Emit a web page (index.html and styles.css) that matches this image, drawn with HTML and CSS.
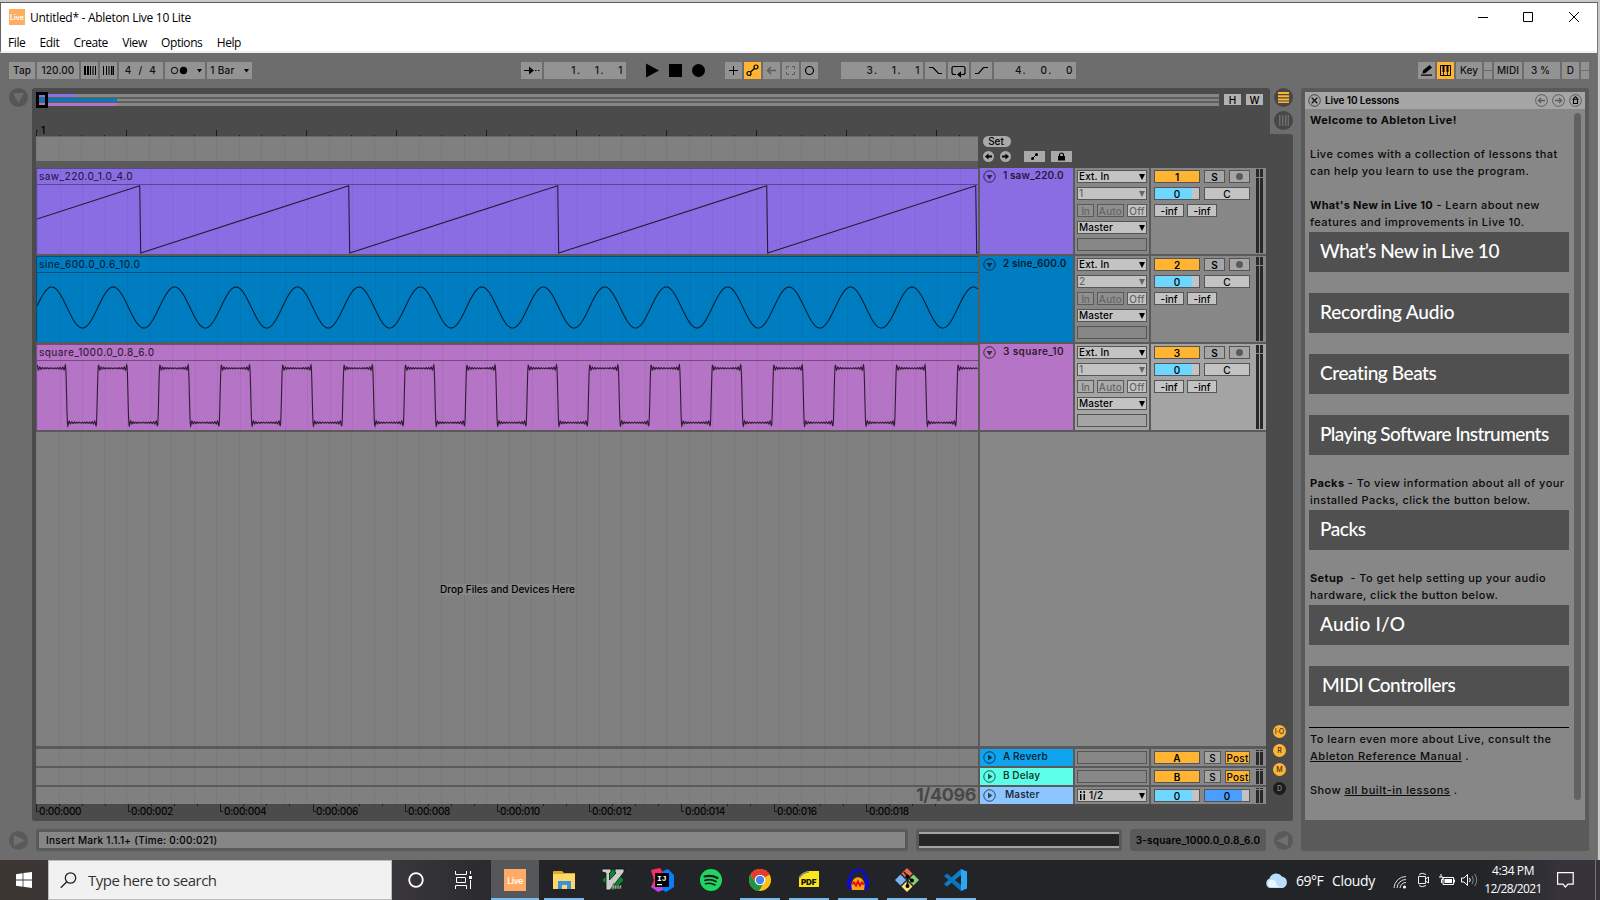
FILE: index.html
```html
<!DOCTYPE html>
<html lang="en">
<head>
<meta charset="utf-8">
<title>Untitled* - Ableton Live 10 Lite</title>
<link rel="stylesheet" href="styles.css">
</head>
<body>
<div class="desktop">
<div class="window">
  <div class="titlebar">
    <span class="app-icon">Live</span>
    <span class="title">Untitled* - Ableton Live 10 Lite</span>
    <svg class="winbtns" width="120" height="28" fill="none" stroke="#000"><path d="M1 14.5h10M46.5 9.5h9v9h-9zM92 9l10 10M102 9l-10 10"/></svg>
  </div>
  <div class="menubar"><span>File</span><span>Edit</span><span>Create</span><span>View</span><span>Options</span><span>Help</span></div>
  <div class="app">
    <div class="toolbar">
      <div class="tb" style="width:26px">Tap</div>
      <div class="tb" style="width:42px">120.00</div>
      <div class="tb" style="width:17px"><svg width="17" height="17"><path d="M3 4h2v9H3zM6 4h2v9H6zM9 4h1v9H9zM11.500 4h1v9h-1zM14 4h1v9h-1z"/></svg></div>
      <div class="tb" style="width:17px"><svg width="17" height="17"><path d="M3 4h1v9H3zM6 4h1v9H6zM8.500 4h1v9h-1zM11 4h1.500v9H11zM13 4h1v9h-1z"/></svg></div>
      <div class="tb wide" style="width:44px">4 / 4</div>
      <div class="tb" style="width:40px"><svg width="40" height="17"><circle cx="9.500" cy="8.500" r="3.200" fill="none" stroke="#000"/><circle cx="18.500" cy="8.500" r="3.700"/><path d="M32 7h5l-2.500 3.500z"/></svg></div>
      <div class="tb bar" style="width:45px">1 Bar<svg width="5" height="4"><path d="M0 0h5l-2.500 3.500z"/></svg></div>

      <div class="tb g2" style="width:21px"><svg width="21" height="17"><path d="M3 8h5V4.500l5 4-5 4V9H3zM14 8h1.500v1H14zM17 8h1.500v1H17z"/></svg></div>
      <div class="tb num" style="width:82px">1.&nbsp; 1.&nbsp; 1</div>
      <svg class="transport" width="62" height="17"><path d="M2 1.500v14l13-7zM25 2h13v13H25z"/><circle cx="54.500" cy="8.500" r="6.500"/></svg>
      <div class="tb" style="width:17px;margin-left:17px"><svg width="17" height="17"><path d="M4 8.500h9M8.500 4v9" stroke="#000"/></svg></div>
      <div class="tb on" style="width:17px"><svg width="17" height="17" fill="none" stroke="#000" stroke-width="1.200"><circle cx="5" cy="11.500" r="2"/><circle cx="12" cy="5" r="2"/><path d="M6.500 10l4-3.500"/></svg></div>
      <div class="tb" style="width:17px"><svg width="17" height="17" fill="none" stroke="#5c5c5c" stroke-width="1.500"><path d="M4.500 8.500H13M8 5L4.500 8.500 8 12"/></svg></div>
      <div class="tb" style="width:17px"><svg width="17" height="17" fill="none" stroke="#5c5c5c"><path d="M4.500 7V4.500H7M10 4.500h2.500V7M12.500 10v2.500H10M7 12.500H4.500V10"/></svg></div>
      <div class="tb" style="width:17px"><svg width="17" height="17"><circle cx="8.500" cy="8.500" r="4" fill="none" stroke="#000" stroke-width="1.200"/></svg></div>

      <div class="tb num" style="width:82px;margin-left:21px">3.&nbsp; 1.&nbsp; 1</div>
      <div class="tb" style="width:21px"><svg width="21" height="17" fill="none" stroke="#000" stroke-width="1.200"><path d="M4 5.500h4l5.500 6H17"/></svg></div>
      <div class="tb" style="width:21px"><svg width="21" height="17" fill="none" stroke="#000" stroke-width="1.200"><path d="M8 12.500H6q-2 0-2-2v-4q0-2 2-2h9q2 0 2 2v4q0 2-2 2h-2"/><path d="M9 12.500l4-3.200v6.400z" fill="#000" stroke="none"/></svg></div>
      <div class="tb" style="width:21px"><svg width="21" height="17" fill="none" stroke="#000" stroke-width="1.200"><path d="M4 11.500h3.500l5-6H17"/></svg></div>
      <div class="tb num" style="width:82px">4.&nbsp; 0.&nbsp; 0</div>

      <div class="tb g4" style="width:17px"><svg width="17" height="17"><path d="M3 12.500h11v1.200H3zM5 8.500L11.500 3 14 5.500 7.500 11 4.500 11.500z"/></svg></div>
      <div class="tb on" style="width:17px"><svg width="17" height="17"><path d="M3.500 3.500h10v10h-10z" fill="none" stroke="#000"/><path d="M5.500 3h2v7h-2zM9.500 3h2v7h-2zM6.200 10h.8v3h-.8zM10.200 10h.8v3h-.8z"/></svg></div>
      <div class="tb" style="width:26px">Key</div>
      <div class="tb lamps"></div>
      <div class="tb" style="width:28px">MIDI</div>
      <div class="tb pct" style="width:36px">3 %</div>
      <div class="tb" style="width:17px">D</div>
      <div class="tb lamps"></div>
    </div>

    <div class="columns">
      <div class="left">
        <div class="main">
          <div class="rail"><svg width="19" height="19"><circle cx="9.500" cy="9.500" r="9.500" fill="#565656"/><path d="M4 5h11l-5.500 10z" fill="#6d6d6d"/></svg></div>
          <div class="arr">
            <div class="overview">
              <svg width="1183" height="16">
                <path d="M2 2h1181v3.300H2zM2 6.700h1181v2.600H2zM2 10.700h1181V14H2z" fill="#868686"/>
                <path d="M2 5h1181v1.500H2zM2 9.200h1181v1.500H2z" fill="#626262"/>
                <path d="M2 2h38v3H2z" fill="#8b6fe3"/><path d="M2 6.500h79v3.200H2z" fill="#007dc2"/><path d="M2 11h79v3H2z" fill="#b573c4"/>
                <path d="M1.500 1.500h9v13h-9z" fill="none" stroke="#000" stroke-width="3"/>
              </svg>
              <div class="hw">H</div><div class="hw">W</div>
            </div>
            <div class="rulerrow">
              <div class="beats">
                <svg class="ruler" id="beatRuler" width="942" height="29"></svg>
                <span class="bar1">1</span>
                <div class="scrub lines"></div>
              </div>
              <div class="locators">
                <span class="set">Set</span>
                <div class="lrow">
                  <svg width="11" height="11"><circle cx="5.500" cy="5.500" r="5.500" fill="#a9a9a9"/><path d="M2 5.500L5.500 2.500v2H9v2H5.500v2z"/></svg>
                  <svg width="11" height="11"><circle cx="5.500" cy="5.500" r="5.500" fill="#a9a9a9"/><path d="M9 5.500L5.500 2.500v2H2v2h3.500v2z"/></svg>
                  <svg class="lb1" width="21" height="11"><path d="M0 0h21v11H0z" fill="#a9a9a9"/><path d="M8.500 7.500l4-4" stroke="#000"/><circle cx="8.500" cy="7.500" r="1.500"/><circle cx="12.500" cy="3.500" r="1.500"/></svg>
                  <svg class="lb2" width="21" height="11"><path d="M0 0h21v11H0z" fill="#a9a9a9"/><path d="M7 5h7v4.500H7z"/><path d="M8.500 5.500V4a2 2 0 0 1 4 0v1.500" fill="none" stroke="#000" stroke-width="1.200"/></svg>
                </div>
              </div>
            </div>

            <div class="tracks">
              <div class="clip purple lines"><div class="cname">saw_220.0_1.0_4.0</div><svg id="saw" width="941" height="86"></svg></div>
              <div class="head purple"><svg width="13" height="13"><circle cx="6.500" cy="6.500" r="5.700"/><path d="M3.500 5h6l-3 4.500z"/></svg>1 saw_220.0</div>
              <div class="io"><div class="sel">Ext. In<i></i></div><div class="sel dim">1<i></i></div><div class="mon"><b>In</b><b>Auto</b><b class="lit">Off</b></div><div class="sel">Master<i></i></div><div class="sel empty"></div></div>
              <div class="mix"><div class="ctl"><div class="r"><b class="act">1</b><b class="solo">S</b><b class="rec"><i></i></b></div><div class="r"><b class="vol">0</b><b class="pan">C</b></div><div class="r s"><b>-inf</b><b>-inf</b></div></div><div class="meter"></div></div>

              <div class="clip blue lines"><div class="cname">sine_600.0_0.6_10.0</div><svg id="sine" width="941" height="86"></svg></div>
              <div class="head blue"><svg width="13" height="13"><circle cx="6.500" cy="6.500" r="5.700"/><path d="M3.500 5h6l-3 4.500z"/></svg>2 sine_600.0</div>
              <div class="io"><div class="sel">Ext. In<i></i></div><div class="sel dim">2<i></i></div><div class="mon"><b>In</b><b>Auto</b><b class="lit">Off</b></div><div class="sel">Master<i></i></div><div class="sel empty"></div></div>
              <div class="mix"><div class="ctl"><div class="r"><b class="act">2</b><b class="solo">S</b><b class="rec"><i></i></b></div><div class="r"><b class="vol">0</b><b class="pan">C</b></div><div class="r s"><b>-inf</b><b>-inf</b></div></div><div class="meter"></div></div>

              <div class="clip pink lines"><div class="cname">square_1000.0_0.8_6.0</div><svg id="square" width="941" height="86"></svg></div>
              <div class="head pink"><svg width="13" height="13"><circle cx="6.500" cy="6.500" r="5.700"/><path d="M3.500 5h6l-3 4.500z"/></svg><em>3 square_10</em></div>
              <div class="io hot"><div class="sel">Ext. In<i></i></div><div class="sel dim">1<i></i></div><div class="mon"><b>In</b><b>Auto</b><b class="lit">Off</b></div><div class="sel">Master<i></i></div><div class="sel empty"></div></div>
              <div class="mix hot"><div class="ctl"><div class="r"><b class="act">3</b><b class="solo">S</b><b class="rec"><i></i></b></div><div class="r"><b class="vol">0</b><b class="pan">C</b></div><div class="r s"><b>-inf</b><b>-inf</b></div></div><div class="meter"></div></div>

              <div class="drop lines"><span>Drop Files and Devices Here</span></div>
              <div class="rest"></div>
            </div>
            <div class="returns">
              <div class="lane lines"></div>
              <div class="head reverb"><svg width="13" height="13"><circle cx="6.500" cy="6.500" r="5.700"/><path d="M5 3.500v6l4.500-3z"/></svg>A Reverb</div>
              <div class="io"><div class="sel empty"></div></div>
              <div class="mix"><div class="ctl"><div class="r"><b class="act">A</b><b class="s2">S</b><b class="post">Post</b></div></div><div class="meter"></div></div>
              <div class="lane lines"></div>
              <div class="head delay"><svg width="13" height="13"><circle cx="6.500" cy="6.500" r="5.700"/><path d="M5 3.500v6l4.500-3z"/></svg>B Delay</div>
              <div class="io"><div class="sel empty"></div></div>
              <div class="mix"><div class="ctl"><div class="r"><b class="act">B</b><b class="s2">S</b><b class="post">Post</b></div></div><div class="meter"></div></div>
              <div class="lane lines grid">1/4096</div>
              <div class="head master"><svg width="13" height="13"><circle cx="6.500" cy="6.500" r="5.700"/><path d="M5 3.500v6l4.500-3z"/></svg><span>Master</span></div>
              <div class="io"><div class="sel"><svg width="9" height="11"><path d="M1 1h1.500v2H1zM1 4h1.500v6H1zM4.500 1H6v2H4.500zM4.500 4H6v6H4.500z"/></svg>1/2<i></i></div></div>
              <div class="mix"><div class="ctl"><div class="r"><b class="vol">0</b><b class="cue">0</b></div></div><div class="meter"></div></div>
            </div>
            <div class="timeruler" id="times"></div>
          </div>
          <div class="side">
            <div class="switches">
              <svg width="19" height="19"><circle cx="9.500" cy="9.500" r="9.500" fill="#474747"/><path d="M4 4h11v2H4zM4 7.200h11v2H4zM4 10.400h11v2H4zM4 13.600h11v1.500H4z" fill="#ffb532"/></svg>
              <svg width="19" height="19"><circle cx="9.500" cy="9.500" r="9.500" fill="#474747"/><path d="M5 4h1.500v11H5zM8 4h1.500v11H8zM11 4h1.500v11H11zM13.700 4h1.300v11h-1.300z" fill="#6d6d6d"/></svg>
            </div>
            <div class="toggles"><span>I·O</span><span>R</span><span>M</span><span class="off">D</span></div>
          </div>
        </div>
        <div class="status">
          <svg width="19" height="19"><circle cx="9.500" cy="9.500" r="9.500" fill="#5a5a5a"/><path d="M5 4v11l11-5.500z" fill="#707070"/></svg>
          <div class="info">Insert Mark 1.1.1+ (Time: 0:00:021)</div>
          <div class="mini"><div></div></div>
          <div class="dev">3-square_1000.0_0.8_6.0</div>
          <svg width="19" height="19"><circle cx="9.500" cy="9.500" r="9.500" fill="#5a5a5a"/><path d="M14 4v11L3 9.500z" fill="#707070"/></svg>
        </div>
      </div>

      <div class="lessons">
        <div class="lhead">
          <svg width="13" height="13" fill="none" stroke="#111"><circle cx="6.500" cy="6.500" r="5.800" stroke="#444"/><path d="M3.700 3.700l5.600 5.600M9.300 3.700L3.700 9.300" stroke-width="1.300"/></svg>
          <span>Live 10 Lessons</span>
          <svg width="13" height="13" fill="none" stroke="#5c5c5c"><circle cx="6.500" cy="6.500" r="5.900"/><path d="M10 6.500H3.500M6 4L3.500 6.500 6 9" stroke-width="1.300"/></svg>
          <svg width="13" height="13" fill="none" stroke="#5c5c5c"><circle cx="6.500" cy="6.500" r="5.900"/><path d="M3 6.500h6.500M7 4l2.500 2.500L7 9" stroke-width="1.300"/></svg>
          <svg width="13" height="13" fill="none" stroke="#000"><circle cx="6.500" cy="6.500" r="5.900" stroke="#5c5c5c"/><path d="M4.500 5v4.500h4V5M3.500 5.200h6M4.500 4.700l2-2 2 2" stroke-width="1.100"/></svg>
        </div>
        <div class="lbody">
          <div class="ltext">
            <p><strong>Welcome to Ableton Live!</strong></p>
            <p class="gap">Live comes with a collection of lessons that<br>can help you learn to use the program.</p>
            <p class="gap"><strong class="tight">What's New in Live 10</strong> - Learn about new<br>features and improvements in Live 10.</p>
            <div class="lbtn first">What’s New in Live 10</div>
            <div class="lbtn rec-audio">Recording Audio</div>
            <div class="lbtn">Creating Beats</div>
            <div class="lbtn long">Playing Software Instruments</div>
            <p class="after"><strong>Packs</strong> - To view information about all of your<br>installed Packs, click the button below.</p>
            <div class="lbtn first">Packs</div>
            <p class="after"><strong>Setup</strong> &nbsp;- To get help setting up your audio<br>hardware, click the button below.</p>
            <div class="lbtn first audio-io">Audio I/O</div>
            <div class="lbtn midi">MIDI Controllers</div>
            <div class="rule"></div>
            <p>To learn even more about Live, consult the<br><u>Ableton Reference Manual</u> .</p>
            <p class="gap">Show <u>all built-in lessons</u> .</p>
            <p class="gap faint">Control surface reference</p>
          </div>
          <div class="scroll"></div>
        </div>
      </div>
    </div>
  </div>
</div>
</div>

<div class="taskbar">
  <div class="start"><svg width="16" height="16" fill="#fff"><path d="M0 2.200L6.600 1.200V7.600H0zM7.400 1.100L16 0v7.600H7.400zM0 8.400h6.600v6.400L0 13.800zM7.400 8.400H16V16l-8.600-1.200z"/></svg></div>
  <div class="search"><svg width="17" height="17" fill="none" stroke="#222" stroke-width="1.300"><circle cx="10.500" cy="6" r="5.200"/><path d="M6.800 9.800L.8 15.800"/></svg><span>Type here to search</span></div>
  <div class="slot cortana"><svg width="18" height="18"><circle cx="9" cy="9" r="6.800" fill="none" stroke="#fff" stroke-width="1.800"/></svg></div>
  <div class="slot tv"><svg width="18" height="18" fill="none" stroke="#fff"><path d="M.5 0v3.500h11V0M.5 18v-3.500h11V18M1.500 6.500h9v5h-9zM15.500 0v3M15.500 9v9"/><path d="M14 5h3v3h-3z" fill="#fff" stroke="none"/></svg></div>
  <div class="slot live open"><span>Live</span></div>
  <div class="slot open"><svg width="22" height="20"><path d="M0 2q0-1 1-1h8l2 2H22v16H0z" fill="#e5a823"/><path d="M0 4h22v15H0z" fill="#ffd86b"/><path d="M5 19v-8h13v8h-4v-4H9v4z" fill="#3a93d6"/></svg></div>
  <div class="slot"><svg width="24" height="24"><path d="M12 1l11 11-11 11L1 12z" fill="#0a8a2b" stroke="#042" /><path d="M1 1h9v3L8.500 5v7L15 5l-1-1V1h9v3L9 22H5V5L1 4z" fill="#ccc" stroke="#111" stroke-width=".8"/><text x="11" y="21" class="vim">im</text></svg></div>
  <div class="slot"><svg width="24" height="24"><path d="M1 2l9-2 4 6-3 16-10-3 3-7z" fill="#fe2d63"/><path d="M13 3l5-2 6 6v12l-8 5-7-4z" fill="#087cfa"/><path d="M1 19l9-6 3 9-5 2z" fill="#b84ad8"/><path d="M5 5h14v14H5z"/><path d="M7 16h5v1.200H7z" fill="#fff"/><text x="7" y="13" class="ij">IJ</text></svg></div>
  <div class="slot"><svg width="22" height="22" fill="none" stroke="#191b1d" stroke-linecap="round"><circle cx="11" cy="11" r="11" fill="#1ed760" stroke="none"/><path d="M4.500 7.500q7-2 13 1.500" stroke-width="2.200"/><path d="M5 11.300q6-1.700 11 1.300" stroke-width="1.800"/><path d="M5.500 14.800q5-1.300 9.500 1.200" stroke-width="1.500"/></svg></div>
  <div class="slot open"><svg width="22" height="22"><circle cx="11" cy="11" r="11" fill="#fbc116"/><path d="M11 11L1.500 5.500A11 11 0 0 1 20.500 5.500z" fill="#e33b2e"/><path d="M11 5.500h9.500L20 5A11 11 0 0 0 1.500 5.500L6 13z" fill="#e33b2e"/><path d="M1.500 5.500A11 11 0 0 0 10 22l5-8.500-4 2.500-5-3z" fill="#229342"/><circle cx="11" cy="11" r="5.300" fill="#fff"/><circle cx="11" cy="11" r="4.200" fill="#4285f4"/></svg></div>
  <div class="slot open"><svg width="22" height="20"><path d="M1 17V8q3-6 10-7h10v16z" fill="#fbe516"/><path d="M1 8q4-6 10-6" stroke="#888" stroke-width="1.500" fill="none"/><text x="3" y="14.500" class="pdf">PDF</text></svg></div>
  <div class="slot open"><svg width="24" height="24"><path d="M4 14V10a8 8 0 0 1 16 0v4" fill="none" stroke="#0a0ae0" stroke-width="2.500"/><path d="M5 22q0-9 3.500-11.500Q12 8 15.500 10.500 19 13 19 22z" fill="#f7a21b"/><path d="M6 16l2-1.500 2 3 2-4 2 4 2-3 2 2" fill="none" stroke="#e01010" stroke-width="2"/><path d="M1 13q0-2 3-2l2 11q-4 0-5-5zM23 13q0-2-3-2l-2 11q4 0 5-5z" fill="#0a0ae0"/></svg></div>
  <div class="slot open"><svg width="24" height="24"><path d="M12 0l5.500 5.500-5.500 5.500-5.500-5.500z" fill="#ee6a4d"/><path d="M5.500 6.500L11 12l-5.500 5.500L0 12z" fill="#7ab3f2"/><path d="M18.500 6.500L24 12l-5.500 5.500L13 12z" fill="#8ad06a"/><path d="M12 13l5.500 5.500L12 24l-5.500-5.500z" fill="#fbe27a"/><path d="M9 4l3.500 4v10M12.500 9l4.500 3.500" stroke="#222" stroke-width="1.800" fill="none"/><circle cx="12.500" cy="8.500" r="2"/><circle cx="12.500" cy="18" r="2"/><circle cx="17" cy="12.500" r="2"/></svg></div>
  <div class="slot open"><svg width="24" height="24"><path d="M17 1l6 2.500v17L17 23z" fill="#2aa9f2"/><path d="M17 1v6L3 18.500 0 16z" fill="#1080c4"/><path d="M17 23v-6L3 5.500 0 8z" fill="#0b74bd"/></svg></div>
  <div class="tray">
    <svg width="23" height="17"><path d="M5 16a5 5 0 0 1-.5-9.500A7 7 0 0 1 17 4.500 6 6 0 0 1 18 16z" fill="#b9defa"/><path d="M5 15a4 4 0 0 1 0-7q5-1 6 3t6 4z" fill="#eaf6ff"/></svg>
    <span class="temp">69°F</span><span class="cloudy">Cloudy</span>
    <svg class="t1" width="14" height="14" fill="none" stroke="#ddd"><path d="M1 13A12 12 0 0 1 13 1.500M4 13a9 9 0 0 1 9-8.500M7 13a6 6 0 0 1 6-5.500"/><circle cx="11.500" cy="12" r="1.500" fill="#fff" stroke="none"/></svg>
    <svg class="t2" width="14" height="16" fill="none" stroke="#eee"><path d="M1.500 4.500h7v7h-7zM8.500 7l3-2v6l-3-2M2 2.500Q5 0 9 2.500M2 13.500q3 2.500 7 0"/></svg>
    <svg class="t3" width="17" height="13" fill="none" stroke="#fff"><path d="M5 3.500h10.500v7H5zM3 0v3M1 3h4v2.500H3.500V9"/><path d="M6.500 5H14v4H6.500zM16 5.500h1v3h-1z" fill="#fff" stroke="none"/></svg>
    <svg class="t4" width="17" height="14" fill="none" stroke="#fff"><path d="M.5 5H3l3.500-3.500v11L3 9H.5zM8.500 5q1.500 2 0 4"/><path d="M11 3q3 4 0 8M13.500 1q4.500 6 0 12" stroke="#888"/></svg>
    <div class="clock"><span class="hm">4:34 PM</span><span class="dt">12/28/2021</span></div>
    <svg class="t5" width="17" height="17" fill="none" stroke="#fff" stroke-width="1.200"><path d="M.6.600h15.600v11.600H11L8.400 15 6 12.200H.6z"/></svg>
    <div class="peek"></div>
  </div>
</div>
<script src="draw.js"></script>
</body>
</html>
```
FILE: styles.css
```css
* { box-sizing: border-box; }
body { margin: 0; width: 1600px; height: 900px; overflow: hidden; font: 500 10px/13px Inter, "Liberation Sans", sans-serif; color: #000; }
svg { display: block; flex: none; }
.desktop { height: 860px; padding-top: 2px; background: #c9c9c9; }
.window { width: 1598px; height: 858px; border-top: 1px solid #5c5c5c; border-right: 1px solid #777; background: #6d6d6d; }

.titlebar, .menubar { font-family: "Open Sans", sans-serif; font-size: 12px; font-weight: 400; background: #fff; border-left: 1px solid #666; display: flex; align-items: center; white-space: nowrap; }
.titlebar { height: 28px; padding-left: 8px; }
.app-icon { width: 16px; height: 16px; background: #ffad63; color: #fff; font: 600 7px/17px Inter, sans-serif; text-align: center; }
.title { margin-left: 5px; letter-spacing: -.3px; }
.winbtns { margin-left: auto; }
.menubar { height: 22px; border-bottom: 2px solid #f0f0f0; padding: 4px 0 0 7px; letter-spacing: -.42px; line-height: 16px; }
.menubar span { margin-right: 14.300px; }

.toolbar { display: flex; gap: 2px; padding: 9px 0 0 9px; height: 35px; }
.tb { height: 17px; background: #939393; display: flex; align-items: center; justify-content: center; flex: none; white-space: nowrap; letter-spacing: .1px; color: #111; font-size: 10px; }
.tb.on { background: #ffb532; }
.tb.wide { letter-spacing: 1.500px; word-spacing: 1.500px; }
.tb.bar { gap: 9px; letter-spacing: .3px; }
.tb.pct { padding-right: 3px; }
.tb.num { justify-content: flex-end; padding-right: 2px; letter-spacing: 1.500px; word-spacing: 2.500px; }
.g2 { margin-left: 267px; }
.g4 { margin-left: 340px; }
.transport { margin-left: 16px; }
.lamps { width: 8px; background: linear-gradient(#939393 8px, #6d6d6d 8px 9px, #939393 9px); }

.columns { display: flex; gap: 8px; }
.left { width: 1293px; }
.main { display: flex; height: 733px; }
.rail { width: 32px; padding-left: 9px; }
.arr { width: 1238px; height: 733px; background: #4b4b4b; border-radius: 3px 3px 0 3px; padding: 0 4px; }
.overview { display: flex; align-items: center; height: 20px; padding-top: 4px; gap: 5px; }
.hw { width: 17px; height: 11px; background: #b2b2b2; text-align: center; line-height: 12px; margin-top: -1px; }
.rulerrow { display: flex; height: 60px; }
.beats { width: 942px; position: relative; border-bottom: 7px solid #5a5a5a; }
.bar1 { position: absolute; left: 5px; top: 16px; font-size: 10px; color: #000; }
.scrub { height: 24px; background-color: #808080; }
.lines { background-image: linear-gradient(90deg, rgba(0,0,0,.055) 1px, transparent 1px 23px, rgba(0,0,0,.055) 23px 24px, transparent 24px 45px, rgba(0,0,0,.055) 45px 46px, transparent 46px 68px, rgba(0,0,0,.055) 68px 69px, transparent 69px); background-size: 90px 100%; }
.locators { padding: 28px 0 0 5px; }
.set { display: block; width: 28px; height: 11px; border-radius: 5.500px; background: #a9a9a9; line-height: 11px; text-align: center; padding-right: 2px; }
.lrow { display: flex; margin-top: 4px; }
.lrow svg:nth-child(2) { margin-left: 6px; }
.lb1 { margin-left: 13px; }
.lb2 { margin-left: 6px; }

.tracks, .returns { display: grid; grid-template-columns: 942px 93px 74px 115px; gap: 2px; background: #5a5a5a; }
.tracks { grid-template-rows: 86px 86px 86px 314px; }
.returns { grid-template-rows: 17px 17px 17px; border-top: 3px solid #5a5a5a; }
.purple { background-color: #8a6de3; }
.blue { background-color: #007dc1; }
.pink { background-color: #b574c5; }
.reverb { background: #10a4ee; }
.delay { background: #5cffe8; }
.master { background: #8cc5ff; }
.clip { border-left: 1px solid rgba(0,0,0,.35); display: grid; overflow: hidden; }
.clip > * { grid-area: 1 / 1; }
.cname { height: 17px; border: solid rgba(0,0,0,.35); border-width: 1px 0; padding-left: 2px; line-height: 14px; letter-spacing: .4px; color: rgba(0,0,0,.72); }
.clip svg path { fill: none; stroke: rgba(0,0,0,.75); stroke-width: 1.100; }
.head { display: flex; padding: 2px 0 0 3px; font-weight: 600; letter-spacing: .12px; line-height: 11px; color: rgba(0,0,0,.78); white-space: nowrap; overflow: hidden; gap: 7px; }
.head svg circle { fill: none; stroke: rgba(0,0,0,.65); }
.head svg path { fill: rgba(0,0,0,.65); }
.head span { padding-left: 2px; }
.head em { font-style: normal; letter-spacing: .4px; }
.io, .mix { background: #878787; }
.io { padding: 2px; display: flex; flex-direction: column; gap: 4px; }
.hot { background: #a4a4a4; }
.sel { width: 70px; height: 13px; border: 1px solid #555; background: #c3c3c3; display: flex; align-items: center; justify-content: space-between; padding: 0 1px; line-height: 11px; letter-spacing: .12px; }
.sel i { border: solid transparent; border-width: 6px 3.500px 0; border-top-color: #000; }
.sel.dim { color: #666; }
.sel.dim i { border-top-color: #666; }
.sel.empty { background: none; }
.returns .sel svg + i { margin-left: auto; }
.returns .sel i { margin-left: auto; }
.returns .sel svg { margin-right: 1px; }
.mon { display: flex; gap: 3px; }
.mon b { height: 13px; border: 1px solid #5a5a5a; font-weight: 500; color: #666; text-align: center; line-height: 12px; background: rgba(255,255,255,.08); width: 17px; }
.mon b:nth-child(2) { width: 27px; letter-spacing: .2px; }
.mon .lit { width: 20px; background: #c3c3c3; letter-spacing: .2px; }
.mix { display: flex; padding: 2px 3px 0; }
.ctl { width: 102px; display: flex; flex-direction: column; gap: 4px; }
.r { display: flex; gap: 4px; }
.r b { height: 13px; border: 1px solid #555; line-height: 12px; text-align: center; font-weight: 500; background: #c3c3c3; flex: none; }
.r .act { width: 46px; background: #ffb532; font-weight: 600; }
.r .solo, .r .rec { width: 21px; background: #a6a6a6; }
.r .solo { font-weight: 600; }
.r .rec i { display: block; width: 7px; height: 7px; border-radius: 50%; background: #5a5a5a; margin: 2px auto; }
.r .vol { width: 46px; background: linear-gradient(90deg, #6ed6ff 37px, #c3c3c3 37px); }
.r .cue { width: 46px; background: linear-gradient(90deg, #4a9eff 37px, #c3c3c3 37px); }
.r .pan { width: 46px; }
.r.s { gap: 3px; }
.r.s b { width: 30px; }
.r .s2 { width: 17px; background: #a6a6a6; }
.r .post { width: 25px; background: #ffb532; letter-spacing: .2px; }
.meter { width: 7px; margin: -1px 0 1px; background: linear-gradient(transparent 8px, #878787 8px 9px, transparent 9px), linear-gradient(90deg, #282828 3px, transparent 3px 4px, #282828 4px); }
.returns .meter { background: linear-gradient(transparent 1px, #878787 1px 2px, transparent 2px), linear-gradient(90deg, #282828 3px, transparent 3px 4px, #282828 4px); }
.drop { background-color: #808080; display: flex; justify-content: center; align-items: center; }
.drop span { background: #878787; height: 11px; line-height: 11px; margin: 1px 0 0 1px; }
.rest { grid-column: 2 / 5; background: #878787; }
.lane { background-color: #808080; }
.grid { text-align: right; font: 700 18px/16px Inter, sans-serif; letter-spacing: -.400px; color: #484848; padding-right: 2px; }
.timeruler { display: flex; height: 17px; width: 942px; overflow: hidden; }
.time { flex: none; display: flex; white-space: nowrap; }
.time span { width: 89px; margin-left: -89px; padding-top: 1px; line-height: 13px; letter-spacing: -.320px; color: #050505; }

.side { width: 23px; }
.switches { height: 46px; padding-left: 4px; display: flex; flex-direction: column; gap: 4px; }
.toggles { height: 687px; background: #4b4b4b; border-radius: 0 3px 3px 0; padding: 591px 0 0 3px; display: flex; flex-direction: column; gap: 6px; }
.toggles span { width: 13px; height: 13px; border-radius: 50%; background: #ffb532; font: 500 7px/13px Inter, sans-serif; text-align: center; color: #333; }
.toggles .off { background: #1c1c1c; color: #888; }

.status { display: flex; padding: 8px 0 0 9px; align-items: center; }
.info { margin-left: 8px; width: 872px; height: 22px; border: 3px solid #5a5a5a; border-radius: 3px; background: #868686; padding-left: 7px; line-height: 16px; letter-spacing: .26px; }
.mini { margin-left: 8px; width: 206px; height: 22px; border: 3px solid #5a5a5a; border-radius: 3px; background: #a4a4a4; padding: 2px 0 1px; }
.mini div { height: 12px; background: #252525; }
.dev { margin: 0 8px; width: 136px; height: 22px; border-radius: 3px; background: #5a5a5a; text-align: center; line-height: 22px; letter-spacing: .18px; font-weight: 600; white-space: nowrap; }

.lessons { width: 288px; height: 763px; background: #5a5a5a; border-radius: 3px; padding: 4px; }
.lhead { height: 17px; background: #a5a5a5; display: flex; align-items: center; padding: 0 3px; gap: 4px; }
.lhead span { margin-right: auto; font-weight: 600; letter-spacing: -.120px; }
.lbody { height: 711px; background: #878787; overflow: hidden; display: flex; }
.ltext { width: 269px; padding: 3px 0 0 4px; font-size: 11px; line-height: 17px; letter-spacing: .440px; font-weight: 500; white-space: nowrap; color: #0a0a0a; }
.ltext p { margin: 0 0 0 1px; }
.ltext .gap { margin-top: 17px; }
.ltext .after { margin-top: 20px; }
.ltext strong { font-weight: 700; letter-spacing: .420px; }
.ltext strong.tight { letter-spacing: .280px; }
.ltext u { letter-spacing: .540px; }
.lbtn { width: 260px; height: 40px; margin-top: 21px; background: #505050; color: #fff; font: 500 19px/38px Lato, sans-serif; letter-spacing: -.420px; padding-left: 11px; }
.lbtn.first { margin-top: 1px; }
.lbtn.rec-audio { letter-spacing: -.2px; }
.lbtn.audio-io { letter-spacing: .2px; }
.lbtn.long { letter-spacing: -.600px; }
.lbtn.midi { padding-left: 13px; }
.rule { width: 260px; height: 1px; background: #000; margin: 21px 0 3px; }
.faint { color: #555; }
.scroll { width: 7px; height: 687px; margin-top: 4px; border-radius: 4px; background: #626262; }

.taskbar { height: 40px; display: flex; font-family: "Open Sans", sans-serif; font-weight: 400; color: #fff; background: linear-gradient(90deg, #3b3632, #38363a 400px, #222428 545px, #222428 1480px, #36333a 1560px); }
.start { width: 48px; padding: 12px 16px; }
.search { width: 344px; background: #f1f1f1; border: 1px solid #bbb; display: flex; align-items: center; padding-left: 11px; gap: 11px; }
.search span { color: #333; font-size: 15px; letter-spacing: -.500px; line-height: 20px; }
.slot { width: 49px; display: flex; align-items: center; justify-content: center; flex: none; }
.slot.cortana { width: 48px; }
.slot.tv { width: 51px; padding-right: 4px; }
.slot.live { width: 48px; background: #55575a; margin-right: .500px; }
.slot.live span { width: 22px; height: 22px; background: #ffab66; font: 500 9px/23px Inter, sans-serif; letter-spacing: -.500px; text-align: center; }
.slot.open { background-image: linear-gradient(#76b9ed, #76b9ed); background-size: 40px 2px; background-repeat: no-repeat; background-position: center bottom; }
.slot.live.open { background-size: 48px 2px; }
.vim { font: italic 700 9px "Liberation Serif", serif; fill: #eee; stroke: #111; stroke-width: .3px; }
.ij { font: 700 8px "Liberation Mono", monospace; fill: #fff; }
.pdf { font: 900 8px Inter, sans-serif; letter-spacing: -.200px; fill: #111; }
.tray { margin-left: auto; display: flex; align-items: center; width: 335px; flex: none; white-space: nowrap; }
.temp { font-size: 14px; letter-spacing: -.500px; margin-left: 8px; width: 36px; }
.cloudy { font-size: 14px; letter-spacing: -.320px; width: 61px; }
.t1 { margin-top: 3px; }
.t2 { margin-left: 10px; }
.t3 { margin-left: 7px; }
.t4 { margin-left: 6px; }
.clock { margin-left: 4px; width: 62px; display: flex; flex-direction: column; align-items: center; font-size: 12px; line-height: 17.500px; padding-bottom: 1px; }
.clock .hm { letter-spacing: -.400px; }
.clock .dt { letter-spacing: -.620px; }
.t5 { margin-left: 13px; }
.peek { width: 1px; height: 40px; background: #777; margin-left: auto; margin-right: 4px; }
```
FILE: draw.js
```
const NS = 'http://www.w3.org/2000/svg';
function addPath(svg, d, attrs) {
  const p = document.createElementNS(NS, 'path');
  p.setAttribute('d', d);
  for (const k in attrs || {}) p.setAttribute(k, attrs[k]);
  svg.appendChild(p);
}
function trace(id, fn, step) {
  let d = '';
  for (let x = 0; x <= 941; x += step) d += (x ? 'L' : 'M') + x.toFixed(2) + ' ' + fn(x).toFixed(2);
  addPath(document.getElementById(id), d);
}

// Sawtooth: one cycle every 209px
let saw = 'M0 51L102.700 17.700L103.700 85';
for (let x = 103.7; x < 941; x += 209) saw += `L${x + 208} 17.700L${x + 209} 85`;
addPath(document.getElementById('saw'), saw);

trace('sine', x => 51.5 - 20.5 * Math.cos((x - 14.7) / 61.45 * 2 * Math.PI), 1);

// Band-limited square: odd harmonics with softened ringing
trace('square', x => {
  const t = (x - 60.3) / 61.4 * 2 * Math.PI;
  let s = 0;
  for (let k = 1; k <= 23; k += 2) s += Math.sin(k * t) / k;
  s *= 4 / Math.PI;
  if (Math.abs(s) > 0.85) s = Math.sign(s) * (1 + (Math.abs(s) - 1) * 0.7);
  return 51.5 - 27.2 * s;
}, 0.4);

// Beat ruler ticks
let big = '', small = '';
const offs = [0, 23, 45, 68];
for (let b = 0; b < 942; b += 90) offs.forEach((o, i) => {
  const x = b + o;
  if (x > 941) return;
  if (i) small += `M${x} 27h1v1h-1z`; else big += `M${x} 22h1v6h-1z`;
});
const ruler = document.getElementById('beatRuler');
addPath(ruler, 'M0 28h942v1H0z', { fill: '#666' });
addPath(ruler, big + small + 'M0 22h2v1H0z', { fill: '#1c1c1c' });

// Time ruler labels, one every 2ms
const times = document.getElementById('times');
for (let i = 0; i < 10; i++) {
  const cell = document.createElement('div');
  cell.className = 'time';
  const svg = document.createElementNS(NS, 'svg');
  svg.setAttribute('width', i === 2 || i === 7 ? 93 : 92);
  svg.setAttribute('height', 17);
  addPath(svg, 'M0 0h1v8H0zM0 7h3v1H0zM23 0h1v2h-1zM46 0h1v2h-1zM69 0h1v2h-1z', { fill: '#1c1c1c' });
  cell.appendChild(svg);
  const label = document.createElement('span');
  label.textContent = '0:00:0' + String(i * 2).padStart(2, '0');
  cell.appendChild(label);
  times.appendChild(cell);
}
```
